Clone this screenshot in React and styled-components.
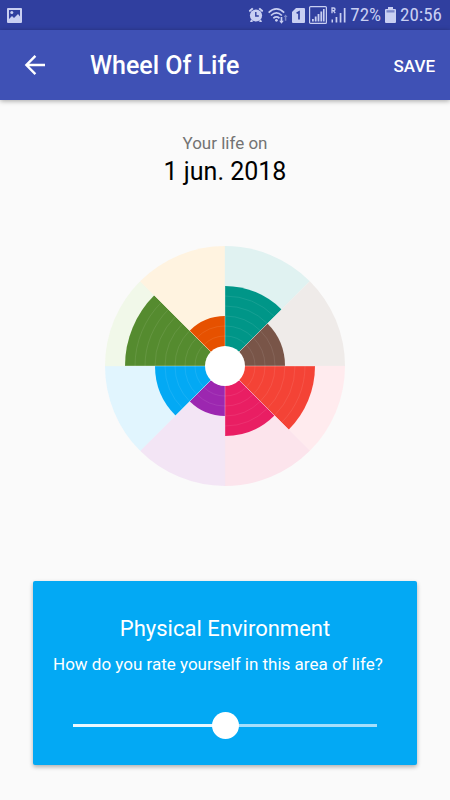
import React, { useState } from 'react';
import styled, { createGlobalStyle } from 'styled-components';

const primary = '#3f51b5';
const primaryDark = '#303f9f';
const statusTint = '#c9cff2';
const white = '#ffffff';
const cardBlue = '#03a9f4';

const GlobalStyle = createGlobalStyle`
  body {
    margin: 0;
    background: #fafafa;
    font-family: Roboto, "Liberation Sans", sans-serif;
  }
  * {
    box-sizing: border-box;
  }
`;

const Screen = styled.div`
  display: flex;
  flex-direction: column;
  min-height: 100vh;
`;

const StatusBar = styled.div`
  display: flex;
  align-items: center;
  justify-content: space-between;
  height: 30px;
  padding: 0 8px 0 7px;
  background: ${primaryDark};
  color: ${statusTint};
`;

const StatusGroup = styled.div`
  display: flex;
  align-items: center;
  gap: 4px;
`;

const StatusText = styled.span`
  font-family: "Roboto Condensed", Roboto, sans-serif;
  font-size: 19px;
  line-height: 30px;
`;

const StatusIcon = styled.svg`
  display: block;
  flex: none;
  fill: currentColor;
`;

const Toolbar = styled.header`
  display: flex;
  align-items: center;
  height: 70px;
  padding: 2px 15px 0 22px;
  background: ${primary};
  color: ${white};
  box-shadow: 0 1px 5px rgba(0, 0, 0, 0.35);
`;

const ToolbarButton = styled.button`
  display: flex;
  padding: 0;
  border: 0;
  background: none;
  color: ${white};
  font: 500 17px/24px Roboto, sans-serif;
  cursor: pointer;
`;

const ToolbarTitle = styled.h1`
  flex: 1;
  margin: 0 0 0 42px;
  font-size: 25px;
  font-weight: 500;
  line-height: 32px;
`;

const Content = styled.main`
  display: flex;
  flex: 1;
  flex-direction: column;
  padding: 32px 33px 35px;
`;

const DateHeading = styled.h2`
  margin: 0;
  color: #000000;
  font-size: 25px;
  font-weight: 400;
  line-height: 36px;
  text-align: center;
`;

const DateCaption = styled.span`
  display: block;
  color: #737373;
  font-size: 17px;
  line-height: 22px;
`;

const WheelChart = styled.svg`
  display: block;
  width: 240px;
  height: 240px;
  margin: 56px auto;
`;

const RatingCard = styled.section`
  margin-top: auto;
  padding: 32px 20px 20px;
  border-radius: 2px;
  background: ${cardBlue};
  color: ${white};
  box-shadow: 0 2px 4px rgba(0, 0, 0, 0.3);
`;

const AreaName = styled.h3`
  margin: 0;
  font-size: 22px;
  font-weight: 400;
  line-height: 32px;
  text-align: center;
`;

const Question = styled.label`
  display: block;
  margin: 6px 0 28px;
  font-size: 17px;
  line-height: 26px;
`;

const Slider = styled.input`
  display: block;
  width: calc(100% - 40px);
  height: 40px;
  margin: 0 20px;
  background: none;
  appearance: none;
  cursor: pointer;

  &::-webkit-slider-runnable-track {
    height: 3px;
    background: linear-gradient(
      to right,
      #eaf8fe ${({ $percent }) => $percent}%,
      #a5dffb ${({ $percent }) => $percent}%
    );
  }
  &::-webkit-slider-thumb {
    width: 27px;
    height: 27px;
    margin-top: -12px;
    border: 0;
    border-radius: 50%;
    background: ${white};
    appearance: none;
  }
`;

// clockwise from the top, ratings go from 0 to 10
const areas = [
  { color: '#009688', light: '#e0f2f1', rating: 6 },
  { color: '#795548', light: '#efebe9', rating: 4 },
  { color: '#f44336', light: '#ffebee', rating: 7 },
  { color: '#e91e63', light: '#fce4ec', rating: 5 },
  { color: '#9c27b0', light: '#f3e5f5', rating: 3 },
  { color: '#03a9f4', light: '#e1f5fe', rating: 5 },
  { color: '#558b2f', light: '#f1f8e9', rating: 8 },
  { color: '#e65100', light: '#fff3e0', rating: 3 },
];
const SELECTED = 5;
const HUB = 20;
const STEP = 10;

const point = (radius, index) => {
  const angle = (index * Math.PI) / 4;
  return `${radius * Math.sin(angle)} ${-radius * Math.cos(angle)}`;
};

const arc = (radius, index) =>
  `M${point(radius, index)}A${radius} ${radius} 0 0 1 ${point(radius, index + 1)}`;

const slice = (radius, index) => `${arc(radius, index)}L0 0Z`;

const Wheel = ({ ratings }) => (
  <WheelChart viewBox="-120 -120 240 240" role="img" aria-label="Wheel of life">
    {areas.map(({ color, light }, i) => (
      <g key={color}>
        <path d={slice(120, i)} fill={light} />
        <path d={slice(HUB + ratings[i] * STEP, i)} fill={color} />
        {Array.from({ length: Math.max(ratings[i] - 1, 0) }, (_, n) => (
          <path
            key={n}
            d={arc(HUB + (n + 1) * STEP, i)}
            fill="none"
            stroke={light}
            strokeOpacity="0.2"
            strokeWidth="0.5"
          />
        ))}
      </g>
    ))}
    {areas.map(({ color, light }, i) => (
      <path key={color} d={`M0 0L${point(120, i)}`} stroke={light} strokeOpacity="0.6" strokeWidth="0.6" />
    ))}
    <circle r={HUB} fill={white} />
  </WheelChart>
);

const PictureIcon = () => (
  <StatusIcon width="15" height="15" viewBox="0 0 15 15">
    <path
      fillRule="evenodd"
      d="M1 0h13a1 1 0 0 1 1 1v13a1 1 0 0 1-1 1H1a1 1 0 0 1-1-1V1a1 1 0 0 1 1-1zM2 2v9l3-3 2 2 4-4 2 2.5V2z"
    />
    <circle cx="4.8" cy="4.6" r="1.5" />
  </StatusIcon>
);

const AlarmIcon = () => (
  <StatusIcon width="16" height="16" viewBox="0 0 15 16">
    <path d="M0.3 3.6L3.6 0.8 5 2 1.2 5.2zM14.7 3.6L11.4 0.8 10 2 13.8 5.2z" />
    <path d="M2.5 12.5L1.5 15H3.5L5 14zM12.5 12.5L13.5 15H11.5L10 14z" />
    <circle cx="7.5" cy="8.5" r="6.1" />
    <path d="M7.3 5V9H10.3" fill="none" stroke={primaryDark} strokeWidth="1.4" />
  </StatusIcon>
);

const WifiIcon = () => (
  <StatusIcon width="20" height="17" viewBox="0 0 19 16">
    <g fill="none" stroke="currentColor" strokeWidth="1.6">
      <path d="M0.6 5.2Q8 -1.6 15.4 5.2" />
      <path d="M2.8 8Q8 3.2 13.2 8" />
      <path d="M5.1 10.6Q8 8.2 10.9 10.6" />
    </g>
    <circle cx="8" cy="12.6" r="1.3" />
    <path d="M12 9.5h1.6V13h1.4l-2.2 2.8L10.6 13H12z" />
    <path d="M16 13V9.5h-1.2L16.7 7l1.9 2.5h-1.2V13z" opacity="0.5" />
  </StatusIcon>
);

const SimIcon = () => (
  <StatusIcon width="13" height="15" viewBox="0 0 13 15">
    <path d="M4 0h8a1 1 0 0 1 1 1v13a1 1 0 0 1-1 1H1a1 1 0 0 1-1-1V4z" />
    <path d="M4.6 5.3L7 4V11.5" fill="none" stroke={primaryDark} strokeWidth="1.7" />
  </StatusIcon>
);

const SignalIcon = () => (
  <StatusIcon width="18" height="18" viewBox="0 0 18 18">
    <rect x="0.6" y="0.6" width="16.8" height="16.8" rx="1" fill="none" stroke="currentColor" strokeWidth="1.2" />
    <path d="M3 13h1.8v2.5H3zM5.8 10.5h1.8v5H5.8zM8.6 8h1.8v7.5H8.6zM11.4 5.5h1.8v10h-1.8zM14 3h1.6v12.5H14z" />
  </StatusIcon>
);

const RoamingIcon = () => (
  <StatusIcon width="15" height="16" viewBox="0 0 15 16">
    <path d="M1 6.2V1H2.7A1.3 1.3 0 0 1 2.7 3.7H1M2.4 3.7L4.2 6.2" fill="none" stroke="currentColor" strokeWidth="1.3" />
    <path d="M0.5 12.5H2V15.5H0.5zM4.6 10h1.7v5.5H4.6zM8.7 6h1.7v9.5H8.7zM12.8 1h1.7v14.5h-1.7z" />
  </StatusIcon>
);

const BatteryIcon = () => (
  <StatusIcon width="11" height="16" viewBox="0 0 11 16">
    <path d="M3 0h5v2h2a1 1 0 0 1 1 1v12a1 1 0 0 1-1 1H1a1 1 0 0 1-1-1V3a1 1 0 0 1 1-1h2z" />
    <path d="M1.5 3.2h8v2.3h-8z" fill={primaryDark} opacity="0.5" />
  </StatusIcon>
);

const BackIcon = () => (
  <svg width="26" height="26" viewBox="0 0 26 26" fill="none" stroke="currentColor" strokeWidth="2.4">
    <path d="M23 12H5M13.4 2.9L4.4 12L13.4 21.1" />
  </svg>
);

export default function App() {
  const [ratings, setRatings] = useState(areas.map((area) => area.rating));

  const rate = (event) => {
    const value = Number(event.target.value);
    setRatings(ratings.map((rating, i) => (i === SELECTED ? value : rating)));
  };

  return (
    <>
      <GlobalStyle />
      <Screen>
        <StatusBar>
          <PictureIcon />
          <StatusGroup>
            <AlarmIcon />
            <WifiIcon />
            <SimIcon />
            <SignalIcon />
            <RoamingIcon />
            <StatusText>72%</StatusText>
            <BatteryIcon />
            <StatusText>20:56</StatusText>
          </StatusGroup>
        </StatusBar>
        <Toolbar>
          <ToolbarButton type="button" aria-label="Back">
            <BackIcon />
          </ToolbarButton>
          <ToolbarTitle>Wheel Of Life</ToolbarTitle>
          <ToolbarButton type="button">SAVE</ToolbarButton>
        </Toolbar>
        <Content>
          <DateHeading>
            <DateCaption>Your life on</DateCaption>
            1 jun. 2018
          </DateHeading>
          <Wheel ratings={ratings} />
          <RatingCard>
            <AreaName>Physical Environment</AreaName>
            <Question htmlFor="rating">How do you rate yourself in this area of life?</Question>
            <Slider
              id="rating"
              type="range"
              min="0"
              max="10"
              value={ratings[SELECTED]}
              $percent={ratings[SELECTED] * 10}
              onChange={rate}
            />
          </RatingCard>
        </Content>
      </Screen>
    </>
  );
}
